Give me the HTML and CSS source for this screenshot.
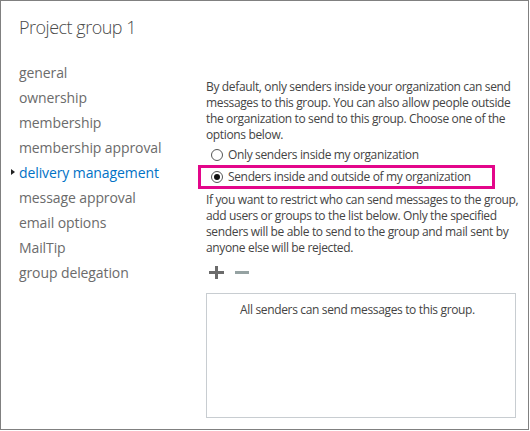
FILE: index.html
```html
<!DOCTYPE html>
<html lang="en">
<head>
<meta charset="utf-8">
<title>Project group 1</title>
<link rel="stylesheet" href="styles.css">
</head>
<body>
<div class="frame">
  <h1 class="title">Project group 1</h1>
  <div class="layout">
    <ul class="nav">
      <li>general</li>
      <li>ownership</li>
      <li>membership</li>
      <li>membership approval</li>
      <li class="active">delivery management</li>
      <li>message approval</li>
      <li>email options</li>
      <li>MailTip</li>
      <li>group delegation</li>
    </ul>
    <div class="panel">
      <p class="text">By default, only senders inside your organization can send messages to this group. You can also allow people outside the organization to send to this group. Choose one of the options below.</p>
      <div class="radio-row"><span class="radio"></span><span>Only senders inside my organization</span></div>
      <div class="radio-row highlighted"><span class="radio checked"></span><span>Senders inside and outside of my organization</span></div>
      <p class="text note">If you want to restrict who can send messages to the group, add users or groups to the list below. Only the specified senders will be able to send to the group and mail sent by anyone else will be rejected.</p>
      <div class="toolbar">
        <svg class="icon" width="15" height="13" viewBox="0 0 15 13"><rect x="0" y="5" width="15" height="3" fill="#6b6b6b"/><rect x="6" y="0" width="3" height="13" fill="#6b6b6b"/></svg>
        <svg class="icon" width="14" height="13" viewBox="0 0 14 13"><rect x="0" y="5" width="14" height="3" fill="#95a2a2"/></svg>
      </div>
      <div class="listbox"><div class="empty">All senders can send messages to this group.</div></div>
    </div>
  </div>
</div>
</body>
</html>
```

FILE: styles.css
```css
* { box-sizing: border-box; }
html, body { margin: 0; padding: 0; background: #fff; }
body { font-family: "Open Sans", "Noto Sans", sans-serif; color: #444; }

.frame {
  width: 529px;
  height: 430px;
  border: 1px solid #808080;
  padding-left: 18px;
}

.title {
  margin: 13px 0 0;
  font-size: 18px;
  font-weight: 300;
  line-height: 26px;
  letter-spacing: -0.5px;
  color: #4a4a4a;
}

.layout {
  display: flex;
  margin-top: 20px;
}

.nav {
  list-style: none;
  margin: 0;
  padding: 0;
  width: 187px;
  flex: none;
  font-size: 14px;
  line-height: 25px;
  letter-spacing: -0.1px;
  color: #6b6b6b;
}
.nav li { position: relative; white-space: nowrap; }
.nav .active { color: #0072c6; }
.nav .active::before {
  content: "";
  position: absolute;
  left: -8px;
  top: 9px;
  border-left: 4px solid #222;
  border-top: 3.5px solid transparent;
  border-bottom: 3.5px solid transparent;
}

.panel {
  width: 316px;
  padding-top: 19px;
  font-size: 12px;
  line-height: 16px;
  letter-spacing: -0.35px;
}

.text { margin: 0 0 1px; }
.note { margin-top: 4px; }

.radio-row {
  position: relative;
  display: flex;
  align-items: center;
  gap: 5px;
  height: 22px;
  padding-left: 5px;
}
.radio {
  width: 12px;
  height: 12px;
  border: 1px solid #555;
  border-radius: 50%;
  flex: none;
  display: flex;
  align-items: center;
  justify-content: center;
}
.radio.checked::after {
  content: "";
  width: 6px;
  height: 6px;
  border-radius: 50%;
  background: #111;
}
.highlighted::after {
  content: "";
  position: absolute;
  left: -8px;
  top: -1px;
  bottom: -1px;
  width: 291px;
  border: 3px solid #e3068a;
}

.toolbar {
  display: flex;
  gap: 11px;
  margin-top: 10px;
  padding-left: 3px;
  height: 13px;
}
.icon { display: block; }

.listbox {
  margin-top: 14px;
  width: 310px;
  height: 125px;
  border: 1px solid #c8cdd1;
  padding: 8px 7px 0 0;
}
.empty { text-align: center; }
```
